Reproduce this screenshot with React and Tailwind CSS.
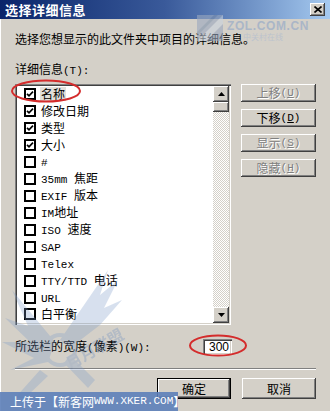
import React from "react";

const isAscii = (s) => /^[\x20-\x7e]+$/.test(s);
function Mixed({ t, mono = "text-[11px]" }) {
  return t.split(/([\x20-\x7e]+)/).filter(Boolean).map((s, i) =>
    isAscii(s) ? (
      <span key={i} className={"font-['Liberation_Mono',monospace] " + mono}>{s}</span>
    ) : (
      <span key={i}>{s}</span>
    )
  );
}

function Check({ on }) {
  return (
    <span className="w-[12px] h-[12px] border-2 border-black bg-white flex items-center justify-center shrink-0">
      {on && (
        <svg width="8" height="8" viewBox="0 0 8 8">
          <path d="M1 3.8 L3 5.8 L7 1.6" stroke="#000" strokeWidth="1.7" fill="none" />
        </svg>
      )}
    </span>
  );
}

const items = [
  ["名称", true, true],
  ["修改日期", true],
  ["类型", true],
  ["大小", true],
  ["#", false],
  ["35mm 焦距", false],
  ["EXIF 版本", false],
  ["IM地址", false],
  ["ISO 速度", false],
  ["SAP", false],
  ["Telex", false],
  ["TTY/TTD 电话", false],
  ["URL", false],
  ["白平衡", false],
];

function SideBtn({ label, k, enabled }) {
  return (
    <div
      className={
        "h-[18px] w-[75px] flex items-center justify-center text-[12px] leading-none bg-[#d4d0c8] shadow-[inset_-1px_-1px_#404040,inset_1px_1px_#fff,inset_-2px_-2px_#808080] " +
        (enabled ? "text-black" : "text-[#808080] [text-shadow:1px_1px_0_#fff]")
      }
    >
      <span>{label}</span>
      <span className="font-['Liberation_Mono',monospace] text-[11px]">
        (<u>{k}</u>)
      </span>
    </div>
  );
}

export default function App() {
  return (
    <div className="w-[330px] h-[411px] relative overflow-hidden bg-[#d4d0c8] flex flex-col font-['Noto_Sans_CJK_SC',sans-serif] text-black">
      {/* Title bar */}
      <div className="h-[19px] shrink-0 flex items-center justify-between pl-[5px] pr-[5px] bg-gradient-to-r from-[#0a246a] via-[#3a5a9a] to-[#a6caf0]">
        <span className="text-white font-bold text-[13px] leading-none tracking-[0.5px]">选择详细信息</span>
        <div className="w-[15px] h-[13px] bg-[#d4d0c8] flex items-center justify-center shadow-[inset_-1px_-1px_#404040,inset_1px_1px_#fff,inset_-2px_-2px_#808080]">
          <svg width="8" height="7" viewBox="0 0 8 7">
            <path d="M0.5 0.5 L7.5 6.5 M7.5 0.5 L0.5 6.5" stroke="#000" strokeWidth="1.6" />
          </svg>
        </div>
      </div>

      {/* Body */}
      <div className="flex-1 flex flex-col pl-[14px] pr-[14px] border-l border-l-white">
        <p className="mt-[13px] text-[12px] leading-[14px]">选择您想显示的此文件夹中项目的详细信息。</p>
        <p className="mt-[16px] text-[12px] leading-[14px]">
          <Mixed t="详细信息(T):" />
        </p>

        <div className="mt-[6px] flex">
          {/* List box */}
          <div className="w-[218px] h-[241px] bg-white p-[2px] flex shadow-[inset_1px_1px_#808080,inset_2px_2px_#404040,inset_-1px_-1px_#fff,inset_-2px_-2px_#d4d0c8]">
            <div className="flex-1 flex flex-col">
              {items.map(([t, on, sel]) => (
                <div key={t} className="h-[17px] flex items-center pl-[7px] gap-[5px] text-[12px] leading-none">
                  <Check on={on} />
                  <span className={sel ? "bg-[#e2dfda] px-[1px] -ml-[1px] py-[1px]" : ""}>
                    <Mixed t={t} />
                  </span>
                </div>
              ))}
            </div>
            {/* Scrollbar */}
            <div className="w-[16px] flex flex-col">
              <div className="h-[16px] bg-[#d4d0c8] flex items-center justify-center shadow-[inset_-1px_-1px_#404040,inset_1px_1px_#fff,inset_-2px_-2px_#808080]">
                <svg width="7" height="4" viewBox="0 0 7 4"><path d="M3.5 0 L7 4 L0 4 Z" fill="#000" /></svg>
              </div>
              <div className="h-[10px] bg-[#d4d0c8] shadow-[inset_-1px_-1px_#404040,inset_1px_1px_#fff,inset_-2px_-2px_#808080]" />
              <div className="flex-1 bg-[conic-gradient(#d4d0c8_25%,#fff_0_50%,#d4d0c8_0_75%,#fff_0)] bg-[length:2px_2px]" />
              <div className="h-[16px] bg-[#d4d0c8] flex items-center justify-center shadow-[inset_-1px_-1px_#404040,inset_1px_1px_#fff,inset_-2px_-2px_#808080]">
                <svg width="7" height="4" viewBox="0 0 7 4"><path d="M0 0 L7 0 L3.5 4 Z" fill="#000" /></svg>
              </div>
            </div>
          </div>

          {/* Side buttons */}
          <div className="ml-[10px] flex flex-col gap-[7px]">
            <SideBtn label="上移" k="U" />
            <SideBtn label="下移" k="D" enabled />
            <SideBtn label="显示" k="S" />
            <SideBtn label="隐藏" k="H" />
          </div>
        </div>

        {/* Width row */}
        <div className="mt-[14px] flex items-center">
          <div className="w-[188px] text-[12px] leading-[14px]">
            <Mixed t="所选栏的宽度(像素)(W):" />
          </div>
          <div className="w-[29px] h-[16px] bg-white flex items-center justify-end pr-[3px] font-['Liberation_Sans',sans-serif] text-[12px] leading-none shadow-[inset_1px_1px_#808080,inset_2px_2px_#404040,inset_-1px_-1px_#fff,inset_-2px_-2px_#d4d0c8]">
            300
          </div>
        </div>

        {/* Separator */}
        <div className="mt-[13px] h-[2px] border-t border-t-[#808080] border-b border-b-white" />

        {/* Bottom buttons */}
        <div className="mt-[8px] flex justify-end gap-[11px]">
          <div className="w-[74px] h-[21px] flex items-center justify-center text-[12px] leading-none bg-[#d4d0c8] shadow-[inset_0_0_0_1px_#000,inset_-2px_-2px_#404040,inset_2px_2px_#fff,inset_-3px_-3px_#808080]">
            确定
          </div>
          <div className="w-[74px] h-[21px] flex items-center justify-center text-[12px] leading-none bg-[#d4d0c8] shadow-[inset_-1px_-1px_#404040,inset_1px_1px_#fff,inset_-2px_-2px_#808080]">
            取消
          </div>
        </div>
      </div>

      {/* ZOL watermark */}
      <svg className="absolute left-[196px] top-[14px] opacity-60 pointer-events-none" width="28" height="28" viewBox="0 0 28 28">
        <rect x="1" y="1" width="26" height="26" fill="#9aa8bf" />
        <path d="M1 27 L27 1 L27 10 L10 27 Z" fill="#c9d2de" />
        <path d="M1 18 L18 1 L22 1 L1 22 Z" fill="#7f91ad" />
      </svg>
      <div className="absolute left-[227px] top-[20px] font-['Liberation_Sans',sans-serif] font-bold text-[12px] leading-none text-[#aab6c7] tracking-[0.6px] pointer-events-none">
        ZOL.COM.CN
      </div>
      <div className="absolute left-[243px] top-[33px] text-[8px] leading-none text-[#bcc3cd] pointer-events-none">中关村在线</div>

      {/* Wings watermark */}
      <svg className="absolute left-0 top-[230px] opacity-30 pointer-events-none" width="140" height="170" viewBox="0 0 140 170">
        <g fill="#7d9cc9">
          <path d="M60 110 L108 40 L100 65 L118 50 L104 78 L122 70 L100 95 L70 118 Z" />
          <path d="M55 112 L12 60 L28 96 L5 88 L30 112 L2 112 L34 128 L10 140 L48 132 Z" />
          <path d="M40 140 L15 168 L25 168 L48 146 Z" />
          <path d="M70 125 L95 150 L88 158 L64 133 Z" />
        </g>
        <circle cx="60" cy="120" r="15" fill="none" stroke="#7d9cc9" strokeWidth="4" />
        <text x="70" y="140" fontSize="16" fontWeight="bold" fill="#6a8cc0" transform="rotate(-30 70 140)">月月联盟</text>
      </svg>

      {/* Bottom watermark */}
      <div className="absolute left-0 bottom-0 w-[178px] h-[19px] bg-[#5d7fb9]/90 flex items-center pl-[10px] text-white text-[12px] leading-none whitespace-nowrap">
        <span>上传于【新客网 </span>
        <span className="font-['Liberation_Mono',monospace] text-[11px]">WWW.XKER.COM</span>
        <span>】</span>
      </div>

      {/* Red annotation ellipses */}
      <svg className="absolute left-[10px] top-[79px] pointer-events-none" width="72" height="24" viewBox="0 0 72 24">
        <ellipse cx="36" cy="12" rx="34" ry="10.5" fill="none" stroke="#d42c2c" strokeWidth="2" />
      </svg>
      <svg className="absolute left-[188px] top-[334px] pointer-events-none" width="60" height="23" viewBox="0 0 60 23">
        <ellipse cx="30" cy="11.5" rx="28" ry="10" fill="none" stroke="#d42c2c" strokeWidth="2" />
      </svg>
    </div>
  );
}
